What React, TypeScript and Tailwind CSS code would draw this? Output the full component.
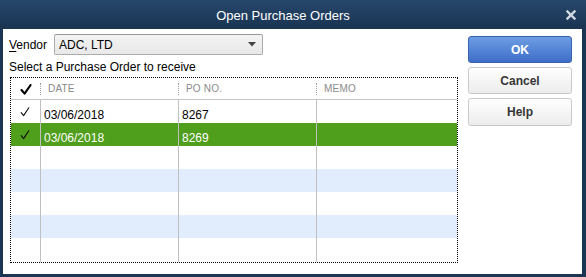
import React from "react";

function SmallCheck({ color = "#111" }: { color?: string }) {
  return (
    <svg width="10" height="10" viewBox="0 0 10 10" className="block">
      <path d="M1.2 5.6 L3.6 8.6 L8.8 0.8" fill="none" stroke={color} strokeWidth="1.1" strokeLinecap="round" strokeLinejoin="round" />
    </svg>
  );
}

function BoldCheck() {
  return (
    <svg width="12" height="11" viewBox="0 0 12 11" className="block">
      <path d="M1.5 6 L4.6 9.6 L10.6 1" fill="none" stroke="#000" strokeWidth="2.1" strokeLinecap="round" strokeLinejoin="round" />
    </svg>
  );
}

type Row = { checked: boolean; date: string; po: string; bg: string; text: string };

const rows: Row[] = [
  { checked: true, date: "03/06/2018", po: "8267", bg: "bg-white", text: "text-black" },
  { checked: true, date: "03/06/2018", po: "8269", bg: "bg-[#4f9e1c]", text: "text-white" },
  { checked: false, date: "", po: "", bg: "bg-white", text: "text-black" },
  { checked: false, date: "", po: "", bg: "bg-[#e1edfc]", text: "text-black" },
  { checked: false, date: "", po: "", bg: "bg-white", text: "text-black" },
  { checked: false, date: "", po: "", bg: "bg-[#e1edfc]", text: "text-black" },
  { checked: false, date: "", po: "", bg: "bg-white", text: "text-black" },
];

function HeaderCell({ label }: { label: string }) {
  return (
    <div className="flex items-center h-full">
      <span className="w-0 h-[12px] border-l border-dotted border-[#9a9a9a]" />
      <span className="ml-[7px] text-[10px] leading-none text-[#8a8a8a] tracking-[0.2px]">{label}</span>
    </div>
  );
}

export default function App() {
  return (
    <div className="w-[586px] h-[277px] bg-[#1b3553] flex flex-col font-['Liberation_Sans',Arial,sans-serif] overflow-hidden">
      {/* Title bar */}
      <div className="h-[29px] flex items-center bg-gradient-to-b from-[#26476c] to-[#1a3452]">
        <div className="flex-1 text-center text-white text-[13px] leading-none pt-[1px]">Open Purchase Orders</div>
        <div className="w-[20px] flex items-center pt-[1px]">
          <svg width="10" height="10" viewBox="0 0 10 10" className="block">
            <path d="M1.5 1.5 L8.5 8.5 M8.5 1.5 L1.5 8.5" stroke="#d3d9e1" strokeWidth="2.4" strokeLinecap="square" />
          </svg>
        </div>
      </div>

      {/* Body */}
      <div className="flex-1 ml-[3px] mr-[4px] mb-[3px] bg-white flex">
        {/* Left column */}
        <div className="flex flex-col pl-[6px] pt-[5px] w-[455px]">
          <div className="flex items-center h-[21px]">
            <span className="w-[45px] text-[12px] leading-[14px] text-black">
              <span className="underline underline-offset-[2px]">V</span>endor
            </span>
            <div className="w-[209px] h-[21px] rounded-[2px] border border-[#ababab] border-t-[#999] bg-gradient-to-b from-[#f3f3f3] to-[#e9e9e9] flex items-center pl-[4px] pr-[6px]">
              <span className="flex-1 text-[12px] leading-[14px] text-black">ADC, LTD</span>
              <svg width="8" height="5" viewBox="0 0 8 5" className="block">
                <path d="M0 0 L8 0 L4 4.5 Z" fill="#444" />
              </svg>
            </div>
          </div>
          <div className="mt-[5px] text-[12px] leading-[14px] text-black">Select a Purchase Order to receive</div>

          {/* Table */}
          <div className="mt-[3px] ml-[1px] w-[448px] h-[186px] border border-dotted border-black flex flex-col">
            <div className="h-[21px] grid grid-cols-[29px_138px_138px_1fr] border-b border-[#c4c4c4] box-content">
              <div className="flex items-center justify-center pl-[1px] pt-[1px]">
                <BoldCheck />
              </div>
              <HeaderCell label="DATE" />
              <HeaderCell label="PO NO." />
              <HeaderCell label="MEMO" />
            </div>
            <div className="flex-1 flex flex-col">
              {rows.map((r, i) => (
                <div
                  key={i}
                  className={`${i === rows.length - 1 ? "flex-1" : "h-[23px]"} grid grid-cols-[30px_138px_138px_1fr] ${r.bg} ${r.text}`}
                >
                  <div className="border-r border-[#c0c0c0] flex justify-center pt-[7px] pr-[1px]">
                    {r.checked ? <SmallCheck /> : null}
                  </div>
                  <div className="border-r border-[#c0c0c0] flex items-end pl-[3px] pb-[1px] text-[12px] leading-[14px]">
                    {r.date}
                  </div>
                  <div className="border-r border-[#c0c0c0] flex items-end pl-[3px] pb-[1px] text-[12px] leading-[14px]">
                    {r.po}
                  </div>
                  <div />
                </div>
              ))}
            </div>
          </div>
        </div>

        {/* Right column: buttons */}
        <div className="flex-1 flex flex-col items-end pt-[7px] pr-[10px] gap-[4px]">
          <button className="w-[104px] h-[27px] rounded-[3px] border border-[#3b62ad] bg-gradient-to-b from-[#6d9de2] to-[#3f6dca] text-white text-[12px] font-bold leading-none">
            OK
          </button>
          <button className="w-[104px] h-[27px] rounded-[3px] border border-[#c9c9c9] bg-gradient-to-b from-white to-[#ececec] text-[#363636] text-[12px] font-bold leading-none">
            Cancel
          </button>
          <button className="w-[104px] h-[28px] rounded-[3px] border border-[#c9c9c9] bg-gradient-to-b from-white to-[#ececec] text-[#363636] text-[12px] font-bold leading-none">
            Help
          </button>
        </div>
      </div>
    </div>
  );
}
